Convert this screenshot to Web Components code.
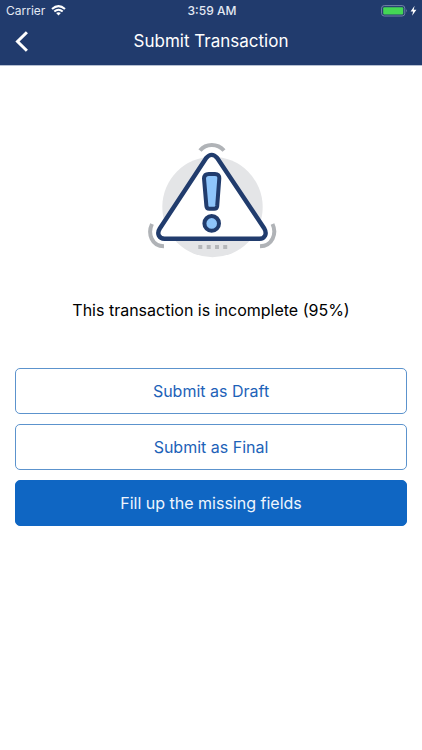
<!DOCTYPE html>
<html lang="en">
<head>
<meta charset="utf-8">
<meta name="viewport" content="width=device-width, initial-scale=1">
<title>Submit Transaction</title>
<style>
  body { margin: 0; background: #fff; color: #000; font-family: Inter, "Liberation Sans", sans-serif; }
</style>
</head>
<body>
<submit-page></submit-page>
<script>
function define(name, html) {
  customElements.define(name, class extends HTMLElement {
    constructor() {
      super();
      const t = document.createElement('template');
      t.innerHTML = html;
      this.attachShadow({ mode: 'open' }).append(t.content.cloneNode(true));
    }
  });
}

define('status-bar', `
  <style>
    :host { display: grid; grid-template-columns: 1fr auto 1fr; align-items: center; height: 20px; padding: 1px 4px 0 6px; box-sizing: border-box; font-size: 12px; line-height: 16px; color: #e4e9f3; }
    svg { display: block; }
    .left { display: flex; align-items: center; gap: 6px; }
    .time { font-weight: 500; }
    .right { display: flex; justify-content: flex-end; }
  </style>
  <div class="left"><span>Carrier</span>
    <svg width="15" height="11" viewBox="0 0 15 11" fill="none" stroke="#fff" stroke-width="2" aria-label="Wi-Fi"><path d="M1 4.1Q7.500-1.900 14 4.100M3.300 6.600Q7.500 2.900 11.700 6.600"/><path d="M5.100 8.100Q7.500 6.200 9.900 8.100L7.500 10.600Z" fill="#fff" stroke="none"/></svg>
  </div>
  <time class="time">3:59 AM</time>
  <div class="right">
    <svg width="37" height="12" viewBox="0 0 37 12" aria-label="Battery charging"><rect x=".6" y=".6" width="23.200" height="10.400" rx="2.600" fill="none" stroke="#7284a7"/><rect x="2.200" y="2.200" width="20" height="7.200" rx="1" fill="#44d755"/><path d="M25 4q1.600 1.800 0 3.600z" fill="#7284a7"/><path d="M33.600.8 29.600 6.400h2.500l-1 4.400 4.300-6h-2.700z" fill="#fff"/></svg>
  </div>`);

define('nav-bar', `
  <style>
    :host { display: grid; grid-template-columns: 44px 1fr 44px; align-items: center; height: 45px; padding-bottom: 1px; box-sizing: border-box; color: #fff; }
    button { display: flex; align-items: center; height: 44px; margin: 0; padding: 0 0 0 15px; border: 0; background: none; color: inherit; }
    h1 { margin: 0; padding-bottom: 2px; font-size: 17px; line-height: 24px; font-weight: 400; text-align: center; }
  </style>
  <button type="button" aria-label="Back"><svg width="14" height="22" viewBox="0 0 14 22" fill="none" stroke="#fff" stroke-width="3"><path d="M11.900 1.200 2.500 10.500 11.900 19.800"/></svg></button>
  <h1><slot></slot></h1>`);

define('warning-art', `
  <style>:host { display: block; } svg { display: block; }</style>
  <svg width="140" height="130" viewBox="141 135 140 130" fill="none" role="img" aria-label="Warning">
    <circle cx="212.500" cy="207" r="50.200" fill="#e4e5e7"/>
    <path d="M206.200 158Q211.700 151.800 217.200 158L264.300 228.500C267.500 234 264.500 238.700 259.500 238.700H164.500C159 238.700 156.500 233.500 159.800 228.500Z" fill="#fff" stroke="#213c6d" stroke-width="4.400" stroke-linejoin="round"/>
    <path d="M204 178.500Q204.300 173.900 208.700 173.900H215Q219.500 173.900 219.300 178.500L217.200 206Q216.900 208.800 214.200 208.800H209.300Q206.700 208.800 206.400 206Z" fill="#8ec5fb" stroke="#213c6d" stroke-width="4"/>
    <circle cx="211.700" cy="223.400" r="7.300" fill="#8ec5fb" stroke="#213c6d" stroke-width="4"/>
    <path d="M200 150.500C206 143 217.500 143 224 150.500M152 224C147.500 233.500 151.500 246 164 246.300M272.500 224C277 233.500 272.500 246 260 246.300" stroke="#b0b3b7" stroke-width="4"/>
    <path d="M198.300 245h4v4h-4zM206.700 245h4v4h-4zM215 245h4v4h-4zM223.200 245h4v4h-4z" fill="#b5b7ba"/>
  </svg>`);

define('action-button', `
  <style>
    :host { display: block; }
    button { display: block; width: 100%; height: 46px; margin: 0; padding: 0; border: 1px solid #5c93cd; border-radius: 5px; background: #fff; color: #1d62b8; font: inherit; font-size: 16px; line-height: 24px; }
    :host([primary]) button { background: #0f66c3; border-color: #0f66c3; color: #eef5fd; }
  </style>
  <button type="button"><slot></slot></button>`);

define('submit-page', `
  <style>
    :host { display: block; }
    header { background: #213b6d; border-bottom: 1px solid #b6c0d2; }
    main { display: flex; flex-direction: column; align-items: center; padding: 69px 15px 24px; }
    p { margin: 33px 0 46px; font-size: 16px; line-height: 24px; text-align: center; }
    .actions { display: grid; gap: 10px; width: 100%; }
  </style>
  <header><status-bar></status-bar><nav-bar>Submit Transaction</nav-bar></header>
  <main>
    <warning-art></warning-art>
    <p>This transaction is incomplete (95%)</p>
    <div class="actions">
      <action-button>Submit as Draft</action-button>
      <action-button>Submit as Final</action-button>
      <action-button primary>Fill up the missing fields</action-button>
    </div>
  </main>`);
</script>
</body>
</html>
